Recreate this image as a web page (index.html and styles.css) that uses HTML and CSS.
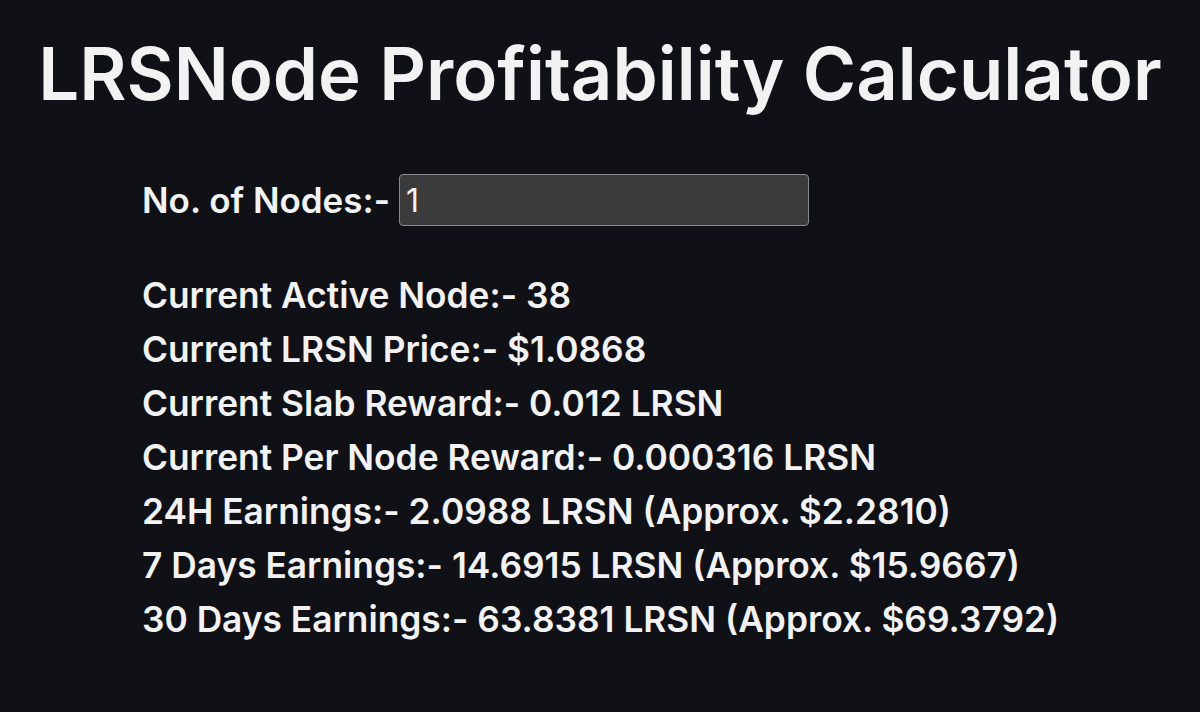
FILE: index.html
```html
<!DOCTYPE html>
<html lang="en">
<head>
<meta charset="utf-8">
<title>LRSNode Profitability Calculator</title>
<link rel="stylesheet" href="styles.css">
</head>
<body>
<main class="page">
  <h1 class="title">LRSNode Profitability Calculator</h1>
  <section class="calc">
    <div class="input-row">
      <label class="label" for="nodes">No. of Nodes:-</label>
      <input class="nodes-input" id="nodes" type="text" value="1">
    </div>
    <div class="stats">
      <p class="stat">Current Active Node:- 38</p>
      <p class="stat">Current LRSN Price:- $1.0868</p>
      <p class="stat">Current Slab Reward:- 0.012 LRSN</p>
      <p class="stat">Current Per Node Reward:- 0.000316 LRSN</p>
      <p class="stat">24H Earnings:- 2.0988 LRSN (Approx. $2.2810)</p>
      <p class="stat">7 Days Earnings:- 14.6915 LRSN (Approx. $15.9667)</p>
      <p class="stat">30 Days Earnings:- 63.8381 LRSN (Approx. $69.3792)</p>
    </div>
  </section>
</main>
</body>
</html>
```
FILE: styles.css
```css
html, body {
  margin: 0;
  padding: 0;
  background: #101116;
}
body {
  font-family: Inter, "Noto Sans", sans-serif;
  color: #f2f2f3;
  width: 1200px;
  height: 712px;
  overflow: hidden;
}
.page {
  display: flex;
  flex-direction: column;
}
.title {
  margin: 0;
  padding-top: 32px;
  font-size: 72.5px;
  font-weight: 600;
  line-height: 84px;
  text-align: center;
  letter-spacing: 0;
}
.calc {
  padding-left: 142px;
  padding-top: 58px;
  display: flex;
  flex-direction: column;
}
.input-row {
  display: flex;
  align-items: center;
  gap: 9px;
}
.label {
  font-size: 35px;
  font-weight: 600;
}
.nodes-input {
  width: 410px;
  height: 52px;
  box-sizing: border-box;
  background: #3b3b3c;
  border: 1.5px solid #8a8a8c;
  border-radius: 4px;
  color: #f2f2f3;
  font-family: Inter, "Noto Sans", sans-serif;
  font-size: 32px;
  font-weight: 400;
  padding: 0 6px;
}
.stats {
  display: flex;
  flex-direction: column;
  padding-top: 43px;
}
.stat {
  margin: 0;
  font-size: 35.3px;
  font-weight: 600;
  line-height: 54px;
}
```
